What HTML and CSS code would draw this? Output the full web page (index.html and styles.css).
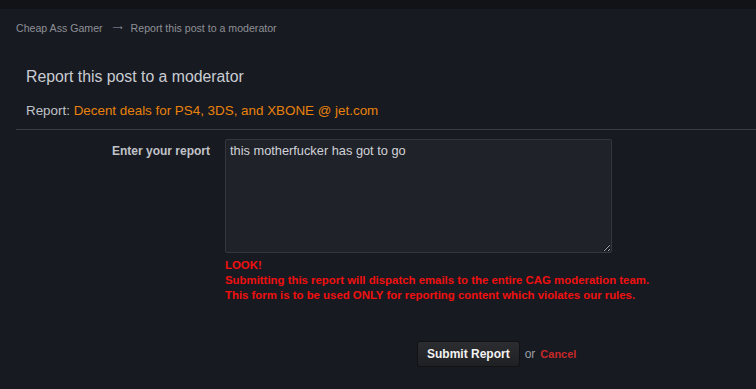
FILE: index.html
```html
<!DOCTYPE html>
<html lang="en">
<head>
  <meta charset="UTF-8" />
  <meta name="viewport" content="width=device-width, initial-scale=1.0" />
  <title>Report this post to a moderator</title>
  <link rel="stylesheet" href="styles.css">
</head>
<body>
  <div class="topbar"></div>

  <div class="breadcrumb">
    <a href="#">Cheap Ass Gamer</a>
    <span class="arrow">&#10230;</span>
    <a href="#">Report this post to a moderator</a>
  </div>

  <div class="main">
    <h1 class="title">Report this post to a moderator</h1>
    <div class="subject">Report: <a href="#">Decent deals for PS4, 3DS, and XBONE @ jet.com</a></div>

    <form class="report-form">
      <div class="row">
        <label for="report" class="label">Enter your report</label>
        <div class="field">
          <textarea id="report">this motherfucker has got to go</textarea>
          <div class="warning">
            LOOK!<br>
            Submitting this report will dispatch emails to the entire CAG moderation team.<br>
            This form is to be used ONLY for reporting content which violates our rules.
          </div>
        </div>
      </div>

      <div class="actions">
        <button type="button">Submit Report</button>
        <span class="or">or</span>
        <a href="#" class="cancel">Cancel</a>
      </div>
    </form>
  </div>
</body>
</html>
```

FILE: styles.css
```css
body {
  font-family: "Liberation Sans", Arial, sans-serif;
  margin: 0;
  background-color: #181a21;
  color: #c8ccd2;
}
a {
  text-decoration: none;
}
.topbar {
  height: 9px;
  background-color: #121317;
}
.breadcrumb {
  display: flex;
  align-items: center;
  padding: 12px 16px 0;
  font-size: 10.6px;
  line-height: 14px;
  color: #8a8d93;
}
.breadcrumb a {
  color: #8d9096;
}
.breadcrumb .arrow {
  margin: 0 8px 0 10px;
  font-family: "DejaVu Sans", sans-serif;
  font-size: 7px;
  color: #9a9da3;
}
.main {
  margin: 32px 0 0 16px;
}
.title {
  margin: 0;
  padding-left: 10px;
  font-size: 15.8px;
  font-weight: normal;
  line-height: 20px;
  color: #c9cdd3;
}
.subject {
  margin-top: 15px;
  padding: 0 0 9px 10px;
  font-size: 13.4px;
  line-height: 18px;
  color: #bfc3c9;
  border-bottom: 1px solid #3a3c41;
}
.subject a {
  color: #e8820c;
}
.report-form {
  padding-top: 9px;
}
.row {
  display: flex;
  gap: 15px;
}
.label {
  width: 194px;
  text-align: right;
  font-size: 12px;
  font-weight: bold;
  line-height: 15px;
  padding-top: 5px;
  color: #c0c3c8;
}
textarea {
  display: block;
  box-sizing: border-box;
  width: 387px;
  height: 114px;
  margin: 0;
  padding: 3px 4px;
  background-color: #202229;
  border: 1px solid #35373c;
  border-radius: 2px;
  color: #d0d3d8;
  font-family: "Liberation Sans", Arial, sans-serif;
  font-size: 12.8px;
  line-height: 16px;
  resize: vertical;
}
.warning {
  margin-top: 5px;
  font-size: 11.4px;
  font-weight: bold;
  line-height: 15px;
  color: #f01010;
}
.actions {
  display: flex;
  align-items: center;
  gap: 5px;
  margin: 38px 0 0 401px;
}
button {
  height: 26px;
  padding: 0 9px;
  background: linear-gradient(#2c2d30, #1f2023);
  border: 1px solid #111214;
  border-radius: 3px;
  color: #f2f2f2;
  font-family: "Liberation Sans", Arial, sans-serif;
  font-size: 12px;
  font-weight: bold;
  cursor: pointer;
}
.or {
  font-size: 12px;
  color: #9a9ea4;
}
.cancel {
  font-size: 11px;
  font-weight: bold;
  color: #c62828;
}
```
